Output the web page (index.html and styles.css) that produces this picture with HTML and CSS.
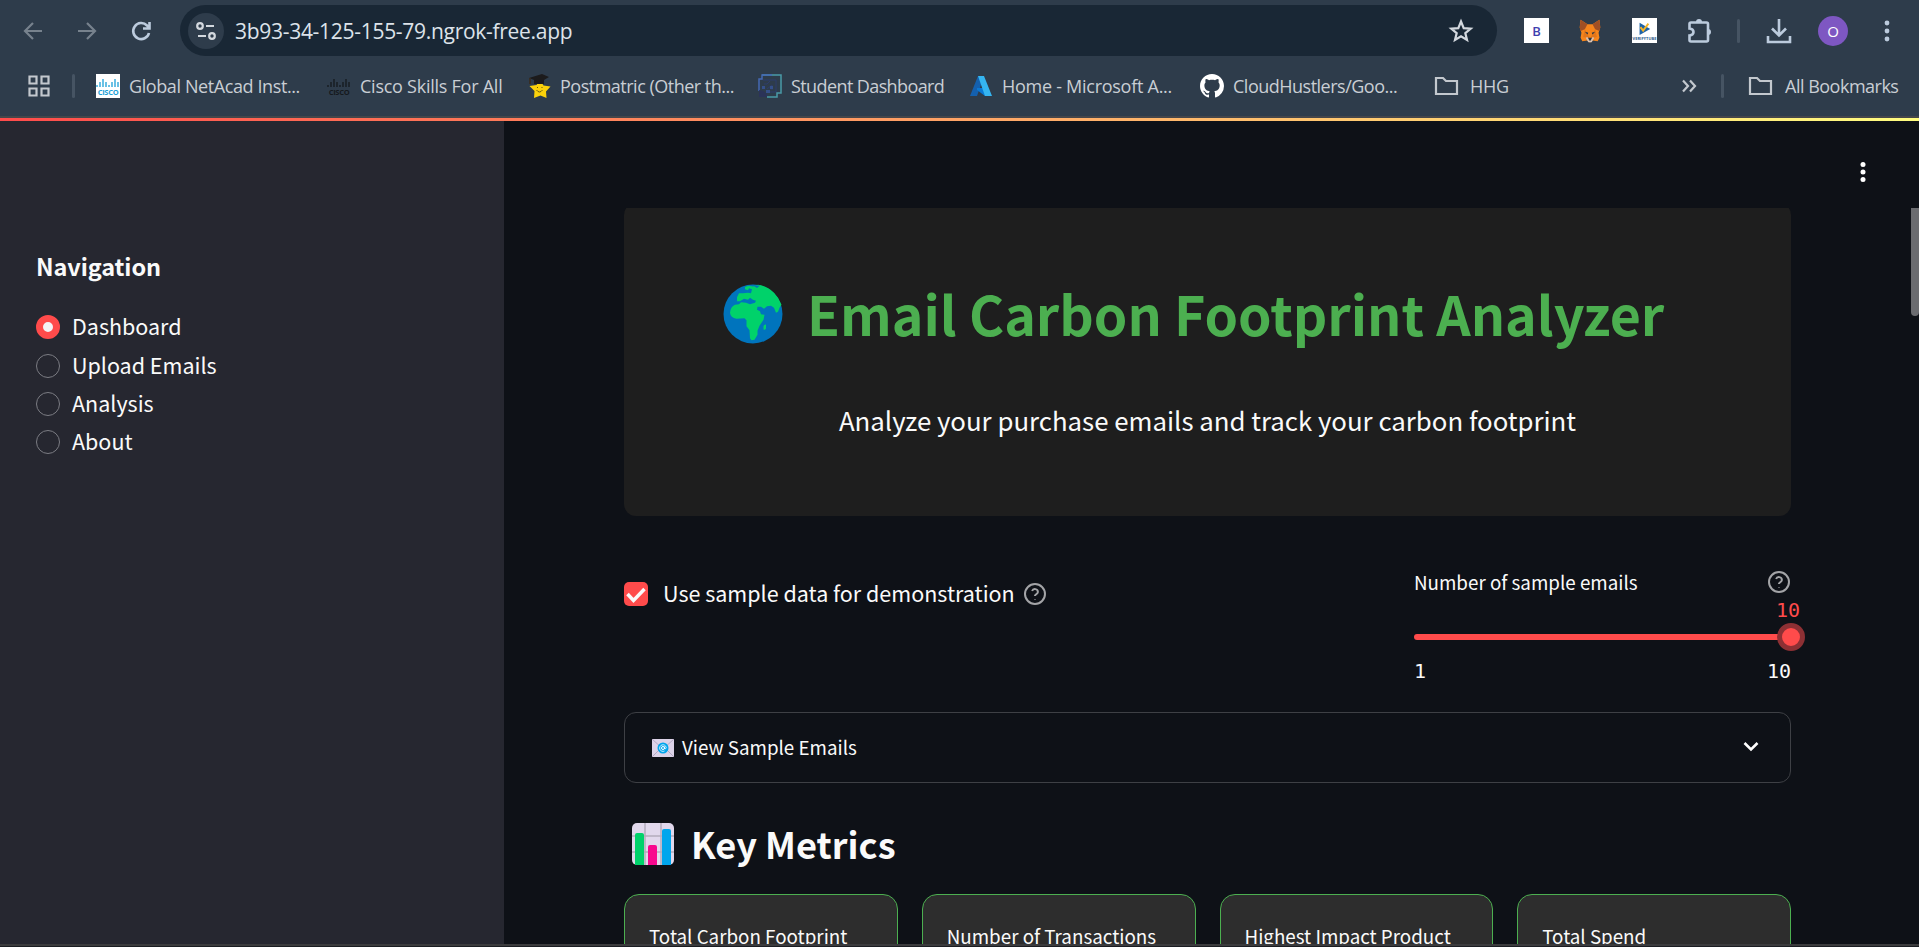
FILE: index.html
```
<!DOCTYPE html>
<html lang="en">
<head>
<meta charset="utf-8">
<title>Email Carbon Footprint Analyzer</title>
<link rel="stylesheet" href="styles.css">
</head>
<body>
<div class="window">
  <header class="chrome">
    <div class="toolbar">
      <div class="nav-buttons">
        <svg class="dim" width="24" height="24" viewBox="0 0 24 24"><path d="M21 12H4M12 4l-8 8 8 8"/></svg>
        <svg class="dim" width="24" height="24" viewBox="0 0 24 24"><path d="M3 12h17M12 4l8 8-8 8"/></svg>
        <svg class="bright" width="24" height="24" viewBox="0 0 24 24"><path d="M20 14a8 8 0 1 1-2-7.500L20 9M20.500 3v6.500H14"/></svg>
      </div>
      <div class="omnibox">
        <span class="site-info"><svg width="22" height="22" viewBox="0 0 22 22"><circle cx="5" cy="6" r="2.800"/><path d="M11 6h8M3 16h8"/><circle cx="17" cy="16" r="2.800"/></svg></span>
        <span class="url">3b93-34-125-155-79.ngrok-free.app</span>
        <svg class="star" width="26" height="26" viewBox="0 0 26 26"><path d="M13 3.500l2.700 6.600 7 .5-5.400 4.500 1.700 6.900-6-3.700-6 3.700 1.700-6.900-5.400-4.500 7-.5z"/></svg>
      </div>
      <div class="extensions">
        <span class="ext-b">B</span>
        <svg width="26" height="24" viewBox="0 0 26 28"><path fill="#f6851b" d="M2 1l8 5h6l8-5 1 9-2 6 1 6-2 4-6-1-2 2h-2l-2-2-6 1-2-4 1-6-2-6z"/><path fill="#a04f24" d="M2 1l8 5-3 6-5 2-1-4zM24 1l-8 5 3 6 5 2 1-4z"/><path fill="#e2761b" d="M7 12l6 11-8-2zM19 12l-6 11 8-2z"/><path fill="#233447" d="M7 15l4 1-1 2zM19 15l-4 1 1 2zM11 23h4l-1 2h-2z"/><path fill="#d7c1b3" d="M8 22l2-1 1 2h4l1-2 2 1-3 5h-4z"/><path fill="#233447" d="M11 22h4l-1 3h-2z"/></svg>
        <span class="ext-v"><svg width="24" height="15" viewBox="0 0 24 17"><path fill="#1d63a8" d="M7 2l12 7-12 7z"/><path d="M8 7l3 4 6-8" fill="none" stroke="#f5b427" stroke-width="2.200"/></svg><b>VERIFYTUBE</b></span>
        <svg class="bright" width="28" height="28" viewBox="0 0 28 28"><path d="M5 5.500h15.500A1.500 1.500 0 0 1 22 7v16a1.500 1.500 0 0 1-1.500 1.500H5A1.500 1.500 0 0 1 3.500 23v-4.500q4-.5 4-3.500t-4-3.500V7A1.500 1.500 0 0 1 5 5.500z"/><path class="solid" d="M10 5a3 3 0 0 1 6 0v1h-6zM22 12a3 3 0 0 1 0 6z"/></svg>
        <i class="sep"></i>
        <svg class="bright" width="28" height="28" viewBox="0 0 28 28"><path d="M14 2v16M7 11.500l7 7 7-7M3 19v6h22v-6"/></svg>
        <span class="avatar">O</span>
        <svg class="kebab" width="6" height="24" viewBox="0 0 6 24"><circle cx="3" cy="4" r="2.400"/><circle cx="3" cy="12" r="2.400"/><circle cx="3" cy="20" r="2.400"/></svg>
      </div>
    </div>
    <nav class="bookmarks">
      <svg class="apps" width="24" height="24" viewBox="0 0 24 24"><path d="M2.500 2.500h7v7h-7zM14.500 2.500h7v7h-7zM2.500 14.500h7v7h-7zM14.500 14.500h7v7h-7z"/></svg>
      <i class="sep"></i>
      <a><span class="cisco"><svg width="24" height="10" viewBox="0 0 24 10"><path d="M1 7v2M4 4v5M7 1v8M10 4v5M13 7v2M16 4v5M19 1v8M22 4v5"/></svg><b>CISCO</b></span><span class="t1">Global NetAcad Inst...</span></a>
      <a><span class="cisco dark"><svg width="24" height="10" viewBox="0 0 24 10"><path d="M1 7v2M4 4v5M7 1v8M10 4v5M13 7v2M16 4v5M19 1v8M22 4v5"/></svg><b>CISCO</b></span><span class="t2">Cisco Skills For All</span></a>
      <a><svg width="24" height="24" viewBox="0 0 24 24"><path fill="#fbd20b" d="M12 6l3.500 5.500 7 1-4.500 5 .5 6.500-6-2.500L6 24l.5-7-5-5 7-1z"/><path fill="#1c1b1c" d="M1 4l13-4 7 3-5 3v4H6V6z"/><path d="M2 4v6" stroke="#3a2a1a" stroke-width="1.500"/><path d="M8.500 16q3 4 6 0M9.500 13v1M14 13v1" fill="none" stroke="#6b5a10"/></svg><span class="t3">Postmatric (Other th...</span></a>
      <a><svg width="24" height="24" viewBox="0 0 24 24" fill="none"><path d="M4 1h19v18h-4v4H9" stroke="#4a9aa8" stroke-width="1.500"/><path d="M14 1H4v4H1v12" stroke="#4468b4" stroke-width="1.500"/><path fill="#2b3358" d="M1 16l4 1 4 3v3H1z"/><path d="M5 6h13v12H8M6 10h3l3-3M9 15l5-4v5" stroke="#2d3c6c"/><path fill="#35508a" d="M4 12h3v3H4zM8 16h4v3H8zM12 12h3v3h-3z"/></svg><span class="t4">Student Dashboard</span></a>
      <a><svg width="24" height="24" viewBox="0 0 24 24"><path fill="#1460ae" d="M9 2h6L8 22H1z"/><path fill="#0a78d4" d="M8 14h10l-2 8-8-6z"/><path fill="#35b5f1" d="M9 2h6l8 20h-7z"/></svg><span class="t5">Home - Microsoft A...</span></a>
      <a><svg width="24" height="24" viewBox="0 0 16 16"><path fill="#fff" d="M8 0C3.580 0 0 3.580 0 8c0 3.540 2.290 6.530 5.470 7.590.4.070.55-.17.55-.38 0-.19-.01-.82-.01-1.490-2.010.37-2.530-.49-2.690-.94-.09-.23-.48-.94-.82-1.130-.28-.15-.68-.52-.01-.53.63-.01 1.080.58 1.230.82.72 1.210 1.870.87 2.330.66.070-.52.28-.87.51-1.070-1.780-.2-3.640-.89-3.640-3.950 0-.87.31-1.590.82-2.150-.08-.2-.36-1.020.08-2.120 0 0 .67-.21 2.200.82.64-.18 1.320-.27 2-.27s1.360.09 2 .27c1.530-1.040 2.200-.82 2.200-.82.44 1.100.16 1.920.08 2.120.51.56.82 1.270.82 2.150 0 3.070-1.870 3.750-3.650 3.950.29.25.54.73.54 1.480 0 1.070-.01 1.930-.01 2.200 0 .21.15.46.55.38A8.010 8.010 0 0 0 16 8c0-4.420-3.580-8-8-8z"/></svg><span class="t6">CloudHustlers/Goo...</span></a>
      <a class="folder"><svg width="25" height="20" viewBox="0 0 25 20"><path d="M2 2h7l3 3h11v13H2z"/></svg><span class="t7">HHG</span></a>
      <svg class="more" width="16" height="14" viewBox="0 0 16 14"><path d="M2 1.500L7 7l-5 5.500M9 1.500L14 7l-5 5.500"/></svg>
      <i class="sep"></i>
      <a class="folder"><svg width="25" height="20" viewBox="0 0 25 20"><path d="M2 2h7l3 3h11v13H2z"/></svg><span class="t8">All Bookmarks</span></a>
    </nav>
  </header>
  <div class="decoration"></div>
  <div class="app">
    <aside class="sidebar">
      <h2><span>Navigation</span></h2>
      <ul>
        <li class="on"><i></i><span>Dashboard</span></li>
        <li><i></i><span>Upload Emails</span></li>
        <li><i></i><span>Analysis</span></li>
        <li><i></i><span>About</span></li>
      </ul>
    </aside>
    <main class="main">
      <div class="app-header"><svg width="6" height="22" viewBox="0 0 6 22"><circle cx="3" cy="3.500" r="2.500"/><circle cx="3" cy="11" r="2.500"/><circle cx="3" cy="18.500" r="2.500"/></svg></div>
      <div class="scroll">
        <div class="scroll-thumb"></div>
        <section class="hero">
          <h1>
            <svg width="60" height="60" viewBox="0 0 60 60"><circle cx="30" cy="30" r="29.500" fill="#0074bd"/><path fill="#00d26a" d="M22 3q2-1 4-1.200l4 .8 5-1.800q9 1 16 8 5 5 7.500 12l-2 3-1.500 4-2 1-2-5-3-2-4 .5-3 2.500-3-2-3.500 0-.5 3 3 1.500 1 3 3.500.5-1 5-4 6-2 5v4l-3 5-3 .5-1.500-2-.5-8-3-4v-6l-2-2-8 .5q-6-1-6.500-6 .5-6 5-8l4-.5 2-2 5 .5 4 1.500 5-1.500 1-2-3-1-3-2-2 2-4-1-4 2.500-3 0v-4l2-4 4 0 5-.5 3 .5 1-4-3-1-1 2-3-1z"/><path fill="#00d26a" d="M40.500 42q1-2 2.500-1.500v4q-1 2-2.500 1z"/><path fill="#0074bd" d="M30 1.500h7l-3 2.500z"/></svg>
            <span>Email Carbon Footprint Analyzer</span>
          </h1>
          <p><span>Analyze your purchase emails and track your carbon footprint</span></p>
        </section>
        <section class="controls">
          <div class="check">
            <i><svg width="24" height="24" viewBox="0 0 24 24"><path d="M3.500 12l6 6.500L20.500 7"/></svg></i>
            <span class="check-label">Use sample data for demonstration</span>
            <svg class="help" width="24" height="24" viewBox="0 0 24 24"><circle cx="12" cy="12" r="10"/><path d="M9.100 9a3 3 0 0 1 5.800 1c0 2-3 2.500-3 4M12 17v.500"/></svg>
          </div>
          <div class="slider">
            <div class="slider-head"><span>Number of sample emails</span><svg class="help" width="24" height="24" viewBox="0 0 24 24"><circle cx="12" cy="12" r="10"/><path d="M9.100 9a3 3 0 0 1 5.800 1c0 2-3 2.500-3 4M12 17v.500"/></svg></div>
            <div class="track"><b>10</b><i></i></div>
            <div class="range"><span>1</span><span>10</span></div>
          </div>
        </section>
        <section class="expander">
          <svg width="24" height="18" viewBox="0 0 24 18"><path fill="#dcd3e8" d="M1 0h22v18H1z"/><path d="M1 0l11 10L23 0M1 18l8-8M23 18l-8-8" fill="none" stroke="#b4a9c4"/><circle cx="12" cy="9" r="5.500" fill="#00a6ed"/><circle cx="12" cy="9" r="1.500" fill="none" stroke="#fff"/><path d="M13.500 7.500v2q1.500 1 1.700-1A3.300 3.300 0 1 0 13.500 12" fill="none" stroke="#fff" stroke-width=".8"/></svg>
          <span>View Sample Emails</span>
          <svg class="chev" width="18" height="14" viewBox="0 0 18 14"><path d="M2.500 3L9 9.500 15.500 3"/></svg>
        </section>
        <h2 class="metrics-title">
          <svg width="42" height="42" viewBox="0 0 42 42"><rect width="42" height="42" rx="5" fill="#e1d8ec"/><path d="M13 0v42M29 0v42M0 13h42M0 29h42" stroke="#b4acbc" stroke-width="1.500"/><path fill="#00d26a" d="M3 42V12q0-2 2-2h5q2 0 2 2v30z"/><path fill="#f8078e" d="M16 42V24q0-2 2-2h5q2 0 2 2v18z"/><path fill="#00a6ed" d="M30 42V8q0-2 2-2h5q2 0 2 2v34z"/></svg>
          <span>Key Metrics</span>
        </h2>
        <section class="cards">
          <div><span class="c1">Total Carbon Footprint</span></div>
          <div><span class="c2">Number of Transactions</span></div>
          <div><span class="c3">Highest Impact Product</span></div>
          <div><span class="c4">Total Spend</span></div>
        </section>
      </div>
    </main>
  </div>
  <footer class="bottom-edge"></footer>
</div>
</body>
</html>
```
FILE: styles.css
```
* { box-sizing: border-box; }
body { margin: 0; background: #0e1117; }
h1, h2, p, ul { margin: 0; padding: 0; }
svg { display: block; flex: none; }
span { white-space: nowrap; }
.window { display: flex; flex-direction: column; width: 1919px; height: 947px; overflow: hidden; font-family: "Noto Sans CJK SC", "Noto Sans", sans-serif; color: #fafafa; }

.chrome { height: 118px; background: #2e3c4b; border-bottom: 2px solid #45464a; font-family: "Open Sans", "Noto Sans", sans-serif; color: #c9ced4; }
.toolbar { display: flex; height: 61px; padding: 5px 29px 5px 21px; }
.nav-buttons { display: flex; gap: 30px; width: 159px; height: 51px; align-items: center; }
.nav-buttons svg, .omnibox svg, .bookmarks > svg, .folder svg, .extensions .bright { fill: none; stroke-width: 2.200; }
.dim { stroke: #77828d; }
.bright { stroke: #bccbdd; }
.nav-buttons .bright, .extensions .bright { stroke-width: 2.600; }
.bright .solid { fill: #bccbdd; stroke: none; }
.omnibox { display: flex; align-items: center; width: 1317px; height: 51px; padding: 0 23px 0 8px; border-radius: 26px; background: #192735; }
.omnibox svg { stroke: #d3d8de; }
.site-info { display: grid; place-items: center; width: 36px; height: 36px; border-radius: 50%; background: #2e3c4b; }
.url { margin-left: 11px; font-size: 21px; letter-spacing: -0.290px; color: #dde3ea; }
.star { margin-left: auto; }
.extensions { display: grid; grid-template-columns: 53px 55px 54px 51px 28px 53px 66px 6px; align-items: center; height: 51px; padding-left: 27px; }
.ext-b { display: grid; place-items: center; width: 25px; height: 25px; background: #fff; color: #3f3fae; font-size: 13px; font-weight: 600; }
.ext-v { width: 25px; height: 25px; padding-top: 3px; background: #fff; overflow: hidden; }
.ext-v b { display: block; font-size: 4px; line-height: 5px; color: #2c5b8c; text-align: center; }
.sep { width: 3px; height: 24px; border-radius: 2px; background: #465463; }
.avatar { display: grid; place-items: center; width: 30px; height: 30px; border-radius: 50%; background: #7e57c2; color: #fff; font-size: 15px; }
.kebab { fill: #bccbdd; }
.bookmarks { display: grid; grid-template-columns: 45px 24px 231px 201px 230px 211px 231px 234px 247px 40px 27px 150px; align-items: center; height: 50px; padding-left: 27px; font-size: 18px; }
.bookmarks > svg, .folder svg { stroke: #c3c8ce; }
.bookmarks a { display: flex; align-items: center; gap: 9px; }
.bookmarks a > span:last-child { margin-top: -1px; }
.bookmarks .folder { gap: 12px; }
.t1 { letter-spacing: -0.400px; }
.t2 { letter-spacing: -0.250px; }
.t3 { margin-left: -1px; letter-spacing: -0.500px; }
.t4 { letter-spacing: -0.600px; }
.t5 { letter-spacing: -0.270px; }
.t6 { letter-spacing: -0.500px; }
.t7 { margin-left: -1px; letter-spacing: -0.300px; }
.t8 { letter-spacing: -0.500px; }
.cisco { display: block; width: 24px; height: 24px; padding-top: 4px; background: #fff; color: #1ba0d7; overflow: hidden; }
.cisco path { stroke: currentColor; stroke-width: 1.300; }
.cisco b { display: block; font-size: 7.500px; line-height: 9px; letter-spacing: -0.300px; text-align: center; }
.cisco.dark { background: none; color: #15191d; }

.decoration { height: 3px; background: linear-gradient(90deg, #ff4b4b, #fffd80); }
.app { display: flex; height: 823px; }
.sidebar { width: 504px; padding: 126px 0 0 36px; background: #262730; }
.sidebar h2 { font-size: 23.500px; line-height: 38px; font-weight: 700; letter-spacing: -0.100px; }
.sidebar ul { margin-top: 23px; list-style: none; }
.sidebar li { display: flex; align-items: center; gap: 12px; height: 38.400px; font-size: 21.500px; }
.sidebar li span { margin-top: -3px; }
.sidebar li i { width: 24px; height: 24px; border: 1.500px solid #7b7c83; border-radius: 50%; }
.sidebar li.on i { border: 7.500px solid #ff4b4b; background: #f4f4f6; }

.main { flex: 1; height: 823px; background: #0e1117; }
.app-header { display: flex; align-items: center; justify-content: flex-end; height: 87px; padding: 15px 53px 0 0; fill: #fff; }
.scroll { position: relative; height: 736px; padding: 0 128px 0 120px; overflow: hidden; }
.scroll-thumb { position: absolute; right: 0; top: 0; width: 8px; height: 108px; border-radius: 0 0 4px 4px; background: #6b6c70; }
.hero { height: 313px; margin-top: -5px; padding-top: 71px; border-radius: 12px; background: #1e1e1e; }
.hero h1 { display: flex; align-items: center; height: 80px; padding-left: 99px; gap: 24px; font-size: 53.700px; line-height: 80px; color: #4caf50; }
.hero h1 span { margin-top: -3px; }
.hero p { margin-top: 46px; text-align: center; font-size: 25.800px; line-height: 40px; }
.controls { display: flex; justify-content: space-between; height: 196px; padding-top: 53px; }
.check { display: flex; align-items: center; height: 50px; }
.check i { width: 24px; height: 24px; border-radius: 5px; background: #ff4b4b; }
.check i path { fill: none; stroke: #fafafa; stroke-width: 3.500; }
.check-label { width: 360px; margin: -3px 0 0 15px; font-size: 21.500px; }
.help { fill: none; stroke: #a3a4a7; stroke-width: 2; }
.slider { width: 377px; }
.slider-head { display: flex; justify-content: space-between; align-items: center; height: 26px; font-size: 18.800px; }
.slider-head span { margin-top: -2px; }
.track { position: relative; height: 6px; margin-top: 39px; border-radius: 3px; background: #ff4b4b; }
.track i { position: absolute; right: -14px; top: -11px; width: 28px; height: 28px; border: 5px solid #8d3034; border-radius: 50%; background: #ff4b4b; }
.track b { position: absolute; right: -9px; top: -36px; font: 20px/24px "DejaVu Sans Mono", monospace; color: #ff4b4b; }
.range { display: flex; justify-content: space-between; margin-top: 18px; font: 20px/26px "DejaVu Sans Mono", monospace; }
.expander { display: flex; align-items: center; height: 71px; padding: 0 30px 0 26px; border: 1px solid #3e4045; border-radius: 12px; font-size: 18.800px; }
.expander span { margin: -2px 0 0 7px; }
.expander .chev { margin: -1px 0 0 auto; fill: none; stroke: #fff; stroke-width: 2.600; }
.metrics-title { display: flex; align-items: center; gap: 17px; height: 70px; margin-top: 26px; padding-left: 8px; font-size: 36.200px; line-height: 70px; }
.metrics-title span { margin-top: -3px; }
.cards { display: grid; grid-template-columns: repeat(4, 1fr); gap: 24px; margin-top: 15px; }
.cards div { height: 150px; padding: 26px 24px; border: 1px solid #4caf50; border-radius: 15px; background: #2d2d2d; font-size: 18.800px; line-height: 30px; }
.bottom-edge { height: 3px; border-top: 2px solid #3b3b3d; background: #1b1d22; }
```
